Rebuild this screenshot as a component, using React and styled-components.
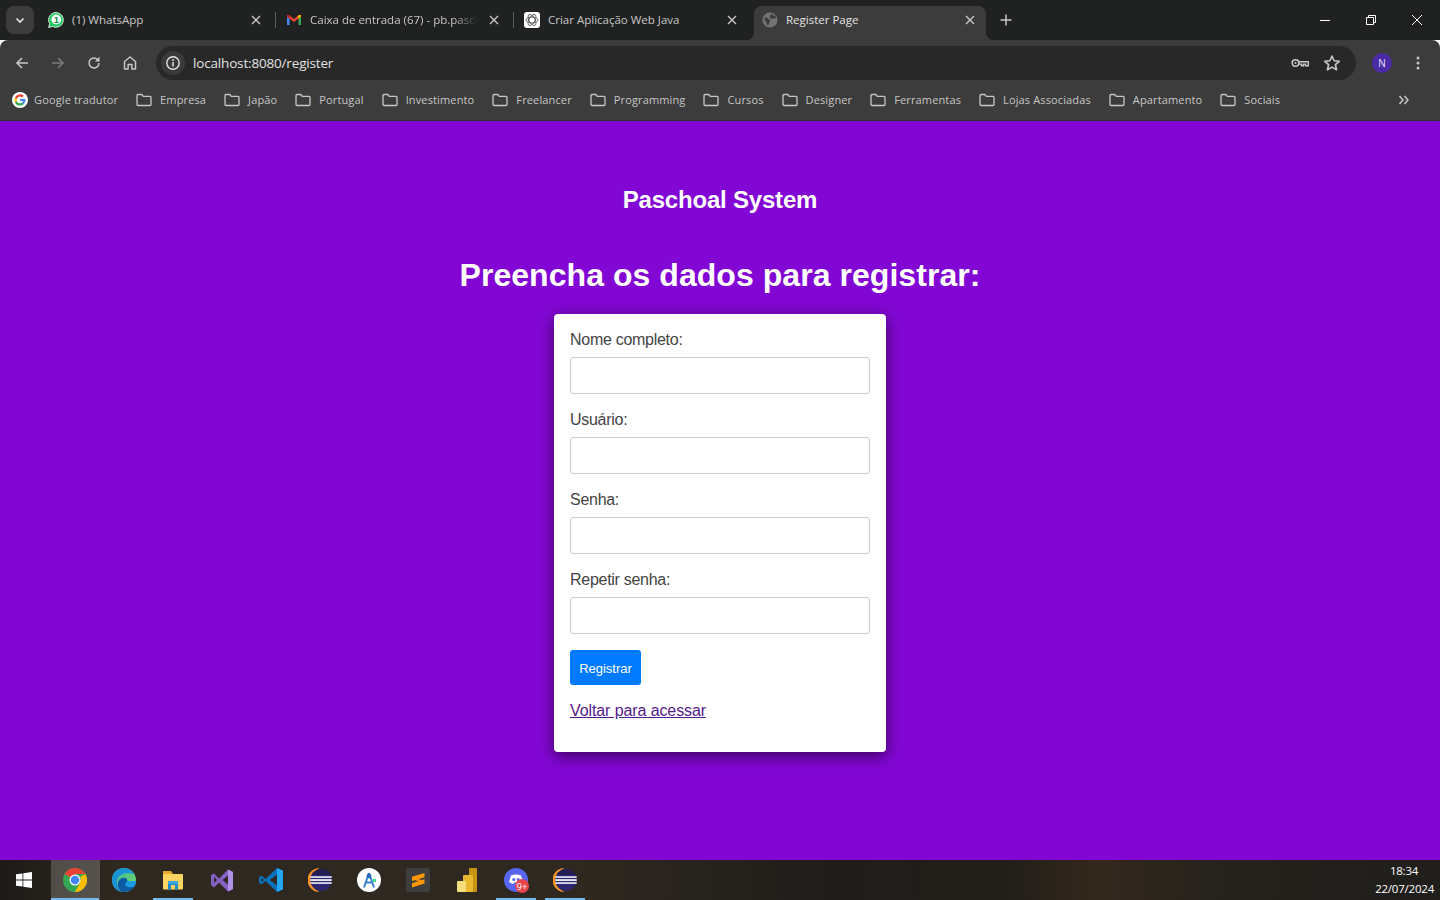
import React from 'react';
import styled, { createGlobalStyle } from 'styled-components';

const Global = createGlobalStyle`
  html, body { margin: 0; padding: 0; height: 100%; overflow: hidden; }
  #root { height: 100%; }
  * { box-sizing: border-box; }
`;

const Screen = styled.div`
  width: 1440px; height: 900px; display: flex; flex-direction: column; overflow: hidden;
  font-family: "Liberation Sans", Arial, sans-serif;
`;
const TabStrip = styled.div`
  height: 40px; background: #202222; display: flex; align-items: flex-end; padding-left: 6px;
  flex: none;
`;
const TabSearch = styled.button`
  width: 28px; height: 28px; margin: 0 6px 6px 0; border: 0; border-radius: 8px; background: #3c3c3c;
  display: flex; align-items: center; justify-content: center; padding: 0; color: #e3e3e3;
`;
const Tab = styled.div`
  position: relative; width: 232px; height: 34px; padding: 0 8px 6px; display: flex; align-items: center; gap: 8px;
  border-radius: 8px 8px 0 0; background: ${p => (p.$active ? '#3c3c3c' : 'transparent')};
  color: ${p => (p.$active ? '#e3e3e3' : '#c7c7c7')};
  ${p => p.$active && `
    &::before, &::after { content: ''; position: absolute; bottom: 0; width: 8px; height: 8px; }
    &::before { left: -8px; background: radial-gradient(circle at 0 0, transparent 8px, #3c3c3c 8.5px); }
    &::after { right: -8px; background: radial-gradient(circle at 100% 0, transparent 8px, #3c3c3c 8.5px); }
  `}
`;
const TabTitle = styled.span`
  flex: 1; min-width: 0; white-space: nowrap; overflow: hidden; font: 11.5px/16px "Open Sans", sans-serif; padding-bottom: 1px;
  ${p => p.$fade && `-webkit-mask-image: linear-gradient(90deg, #000 85%, transparent 100%); mask-image: linear-gradient(90deg, #000 85%, transparent 100%);`}
`;
const TabClose = styled.span`
  width: 16px; height: 16px; display: flex; align-items: center; justify-content: center; flex: none; color: #c7c7c7;
`;
const TabSep = styled.span`
  width: 6px; height: 16px; margin-bottom: 12px; display: flex; justify-content: center; flex: none;
  &::before { content: ''; width: 1px; height: 100%; background: ${p => (p.$blank ? 'transparent' : '#5a5c5c')}; }
`;
const NewTab = styled.span`
  width: 28px; height: 28px; margin: 0 0 6px 6px; display: flex; align-items: center; justify-content: center; color: #c7c7c7;
`;
const WindowControls = styled.div`
  margin-left: auto; align-self: flex-start; display: flex; height: 40px; color: #fff;
`;
const WinBtn = styled.span`
  width: 46px; height: 40px; display: flex; align-items: center; justify-content: center;
`;
const Toolbar = styled.div`
  height: 40px; background: #3c3c3c; flex: none; display: flex; align-items: flex-end; padding: 0 0 0 4px;
  border-radius: 8px 8px 0 0; position: relative;
`;
const NavBtn = styled.span`
  width: 36px; height: 34px; display: flex; align-items: center; justify-content: center; color: ${p => (p.$off ? '#7c7c7c' : '#c7c7c7')};
`;
const Omnibox = styled.div`
  width: 1200px; height: 34px; margin-left: 8px; background: #282828; border-radius: 17px; display: flex; align-items: center; padding: 0 8px 0 5px;
`;
const InfoChip = styled.span`
  width: 24px; height: 24px; border-radius: 50%; background: #3a3a3a; display: flex; align-items: center; justify-content: center; color: #e3e3e3; flex: none;
`;
const Url = styled.span`
  margin-left: 8px; font: 13.5px "Open Sans", sans-serif; color: #e3e3e3; flex: 1; letter-spacing: -.17px;
`;
const OmniIcon = styled.span`
  width: 32px; height: 24px; display: flex; align-items: center; justify-content: center; color: #c7c7c7;
`;
const Avatar = styled.span`
  width: 20px; height: 20px; border-radius: 50%; background: #4b2aa6; color: #e8e4ff; margin-left: 16px; display: flex; align-items: center; justify-content: center;
  font: 10px "Open Sans", sans-serif; margin-bottom: 7px; flex: none;
`;
const Kebab = styled.span`
  margin-left: 16px; margin-bottom: 7px; width: 20px; height: 20px; display: flex; align-items: center; justify-content: center; color: #c7c7c7;
`;
const BookmarkBar = styled.div`
  height: 41px; background: #3c3c3c; border-bottom: 1px solid #2f2f2f; flex: none; display: flex; align-items: center; padding: 0 0 1px 12px; gap: 18px;
`;
const Bookmark = styled.span`
  display: flex; align-items: center; gap: 6px; color: #c7c7c7;
`;
const BookmarkLabel = styled.span`
  font: 11px "Open Sans", sans-serif; white-space: nowrap; margin-left: ${p => p.$inset || 0}px; letter-spacing: .135px;
`;
const More = styled.span`
  margin-left: auto; width: 42px; display: flex; color: #c7c7c7;
`;

const Page = styled.main`
  flex: 1; background: #8307d4; color: #fff; display: flex; flex-direction: column; align-items: center; padding-top: 64px; min-height: 0;
`;
const Brand = styled.h2`
  margin: 0; font-size: 24px; line-height: 29px; font-weight: 700; letter-spacing: -.2px;
`;
const Heading = styled.h1`
  margin: 42px 0 0; font-size: 32px; line-height: 38px; font-weight: 700; letter-spacing: .05px;
`;
const Card = styled.form`
  width: 332px; height: 438px; margin-top: 20px; padding: 16px; background: #fff; border-radius: 4px; box-shadow: 0 4px 16px rgba(0,0,0,.6); color: #333;
  display: flex; flex-direction: column; align-items: flex-start;
`;
const Field = styled.div`
  width: 100%; margin-bottom: 16px; display: flex; flex-direction: column;
`;
const Label = styled.label`
  font-size: 16px; line-height: 19px; margin-bottom: 8px; color: #444; letter-spacing: -.28px;
`;
const Input = styled.input`
  width: 100%; height: 37px; border: 1px solid #ccc; border-radius: 3px; background: #fff; padding: 8px; font: 16px "Liberation Sans", sans-serif; outline: 0;
`;
const Submit = styled.button`
  height: 35px; width: 71px; padding: 1px 0 0; border: 0; border-radius: 3px; background: #007bff; color: #fff; font: 13px "Liberation Sans", sans-serif;
`;
const BackLink = styled.a`
  margin-top: 16px; font-size: 16px; line-height: 19px; color: #551a8b; text-decoration: underline; letter-spacing: -.1px;
`;

const Taskbar = styled.footer`
  height: 40px; flex: none; display: flex; align-items: stretch; color: #fff;
  background: linear-gradient(90deg, #1d1b18 0%, #2f2820 8%, #2f2820 40%, #1f1d1a 58%, #221e19 70%, #33281d 76%, #26221d 85%, #1f1e1b 100%);
`;
const StartBtn = styled.span`
  width: 50.5px; padding-right: 3px; display: flex; align-items: center; justify-content: center; flex: none;
`;
const Pinned = styled.span`
  position: relative; width: 49px; display: flex; align-items: center; justify-content: center; flex: none;
  background: ${p => (p.$active ? 'rgba(255,255,255,.2)' : 'transparent')};
  ${p => p.$open && `
    &::after { content: ''; position: absolute; bottom: 0; height: 2px; left: ${p.$active ? 0 : 4}px; right: ${p.$active ? 1 : 5}px; background: #76b9ed; }
  `}
`;
const Clock = styled.div`
  margin-left: auto; width: 70px; padding: 2px 6px 0 0; text-align: right; font: 11.5px/18px "Open Sans", sans-serif; color: #fff; letter-spacing: -.22px;
`;
const ClockTime = styled.div`
  text-align: center; padding-left: 4px;
`;

const Svg = ({ s = 16, v = 16, children, ...r }) => (
  <svg width={s} height={s} viewBox={`0 0 ${v} ${v}`} fill="none" {...r}>{children}</svg>
);
const X = () => (
  <Svg s={10} v={10}><path d="M1 1l8 8M9 1L1 9" stroke="currentColor" strokeWidth="1.4" /></Svg>
);
const Folder = () => (
  <Svg>
    <path d="M1 3.500c0-.6.4-1 1-1h3.800l1.500 1.800h6.700c.6 0 1 .4 1 1v7.200c0 .6-.4 1-1 1H2c-.6 0-1-.4-1-1z" stroke="currentColor" strokeWidth="1.300" />
  </Svg>
);
const WhatsApp = () => (
  <Svg>
    <path d="M8 .5a7.400 7.400 0 0 0-6.400 11.100L.6 15.500l4-1A7.400 7.400 0 1 0 8 .5z" fill="#1fc95d" stroke="#fff" strokeWidth=".8" />
    <circle cx="8.300" cy="7.500" r="4.900" fill="#fff" />
    <text x="8.300" y="11" textAnchor="middle" fontSize="9.500" fontWeight="700" fontFamily="Liberation Sans" fill="#0a8f45">1</text>
  </Svg>
);
const Gmail = () => (
  <Svg>
    <path d="M1 13V4.300l2.500 1.200V13z" fill="#4285f4" />
    <path d="M15 13V4.300l-2.500 1.200V13z" fill="#34a853" />
    <path d="M1 4.400C1 3 2.400 2.600 3.300 3.300L8 7l4.700-3.700c.9-.7 2.300-.3 2.300 1.100l-2.500 2L8 9.900 3.500 6.400z" fill="#ea4335" />
    <path d="M12.500 6.400 15 4.400C15 3 13.600 2.600 12.700 3.300L11.500 4.200z" fill="#fbbc04" />
    <path d="M1 4.400C1 3 2.400 2.600 3.300 3.300L4.500 4.200 3.500 6.400z" fill="#c5221f" />
  </Svg>
);
const GptIcon = () => (
  <Svg>
    <rect width="16" height="16" rx="3" fill="#fff" />
    <g stroke="#555" strokeWidth=".9" fill="none">
      <ellipse cx="8" cy="8" rx="6" ry="3" />
      <ellipse cx="8" cy="8" rx="6" ry="3" transform="rotate(60 8 8)" />
      <ellipse cx="8" cy="8" rx="6" ry="3" transform="rotate(120 8 8)" />
    </g>
  </Svg>
);
const Globe = () => (
  <Svg>
    <circle cx="8" cy="8" r="7.500" fill="#717374" />
    <path d="M2.500 5.500c2-.5 3 .5 4 1.500s2 1 1.600 2.400-1.400 1-1.400 2.600c0 1-.6 1.500-1.400.7-.8-1-.7-2.500-1.700-3.400-.9-.8-1.600-1.600-.6-3.800zM9 1.500c1.500.3 1 1.800 2 2 1 .2 2-.5 2.500.5l.4 2.500c-1.500-.5-3 0-4 .2-1 .2-2.400-.7-2-2 .3-1.200 1-1.700 1.100-3.200z" fill="#3c3c3c" />
  </Svg>
);
const GoogleG = () => (
  <Svg>
    <circle cx="8" cy="8" r="8" fill="#fff" />
    <path d="M13.400 8.100c0-.4 0-.8-.1-1.100H8v2.100h3a2.600 2.600 0 0 1-1.100 1.700l1.800 1.400c1-1 1.700-2.400 1.700-4.100z" fill="#4285f4" />
    <path d="M8 13.600c1.500 0 2.800-.5 3.700-1.400l-1.800-1.400c-.5.3-1.100.5-1.900.5-1.500 0-2.700-1-3.100-2.300L3 10.400a5.600 5.600 0 0 0 5 3.200z" fill="#34a853" />
    <path d="M4.900 9a3.400 3.400 0 0 1 0-2.100L3 5.500a5.600 5.600 0 0 0 0 5z" fill="#fbbc04" />
    <path d="M8 4.600c.8 0 1.600.3 2.200.8l1.600-1.600A5.600 5.600 0 0 0 3 5.500l1.900 1.400C5.300 5.600 6.500 4.600 8 4.600z" fill="#ea4335" />
  </Svg>
);

const Back = () => <Svg><path d="M14 8H3M8 3 3 8l5 5" stroke="currentColor" strokeWidth="1.600" /></Svg>;
const Forward = () => <Svg><path d="M2 8h11M8 3l5 5-5 5" stroke="currentColor" strokeWidth="1.600" /></Svg>;
const Reload = () => <Svg><path d="M13 8a5 5 0 1 1-1.500-3.600L13 6" stroke="currentColor" strokeWidth="1.500" /><path d="M13.500 1.800v4.700H8.800z" fill="currentColor" /></Svg>;
const Home = () => <Svg><path d="M8 2 2.500 6.500V14h3.600V9.500h3.800V14h3.600V6.500z" stroke="currentColor" strokeWidth="1.500" strokeLinejoin="round" /></Svg>;
const Info = () => <Svg><circle cx="8" cy="8" r="6.200" stroke="currentColor" strokeWidth="1.400" /><path d="M8 7v4.500" stroke="currentColor" strokeWidth="1.500" /><circle cx="8" cy="5" r="1" fill="currentColor" /></Svg>;
const KeyIcon = () => <Svg s={20} v={20}><circle cx="5.500" cy="10" r="3.300" stroke="currentColor" strokeWidth="1.600" /><circle cx="5.500" cy="10" r="1" fill="currentColor" /><path d="M8.800 8.700h9.500v4h-2.800v-1.600h-2v1.600h-2v-1.600H8.800" stroke="currentColor" strokeWidth="1.400" /></Svg>;
const Star = () => <Svg s={18} v={18}><path d="m9 2 2.100 4.800 5.200.5-3.900 3.400 1.200 5.100L9 13.100l-4.600 2.700 1.200-5.100-3.900-3.400 5.200-.5z" stroke="currentColor" strokeWidth="1.600" strokeLinejoin="round" /></Svg>;
const Dots = () => <Svg><circle cx="8" cy="3" r="1.500" fill="currentColor" /><circle cx="8" cy="8" r="1.500" fill="currentColor" /><circle cx="8" cy="13" r="1.500" fill="currentColor" /></Svg>;

const ChromeIcon = () => (
  <Svg s={24} v={24}>
    <circle cx="12" cy="12" r="12" fill="#34a853" />
    <path d="M12 12 1.600 6A12 12 0 0 1 22.400 6H12z" fill="#ea4335" />
    <path d="M12 12h10.400A12 12 0 0 1 12 24l5.200-9z" fill="#fbbc04" />
    <path d="M22.400 6A12 12 0 0 1 12 24l5.200-9a6 6 0 0 0 0-6z" fill="#fbbc04" />
    <circle cx="12" cy="12" r="5.500" fill="#fff" />
    <circle cx="12" cy="12" r="4.300" fill="#4285f4" />
  </Svg>
);
const EdgeIcon = () => (
  <Svg s={24} v={24}>
    <defs>
      <linearGradient id="eg" x1="0" y1="0" x2="1" y2="1"><stop offset="0" stopColor="#2fb6b0" /><stop offset="1" stopColor="#7dd957" /></linearGradient>
    </defs>
    <circle cx="12" cy="12" r="12" fill="url(#eg)" />
    <path d="M0 12C0 5 5 0 12 0c5 0 9 3 10.500 6.500C20 5 12 3.500 7 8.500 3.500 12 4.500 19 9.500 23.700 4 22.500 0 18 0 12z" fill="#1c93d6" />
    <path d="M9.500 23.700C5 20 4.500 13 9 10.500c3-1.700 6.500-.5 6.500 2.500H24c0 6-5 11-12 11-.9 0-1.700-.1-2.500-.3z" fill="#0c59a4" />
    <path d="M15.500 13H24c0 2-.6 3.700-1.500 5.200-3 1.800-7.500 1.500-9-1-.7-1.500.8-2.200 2-4.200z" fill="#1b9de2" />
  </Svg>
);
const ExplorerIcon = () => (
  <Svg s={24} v={24}>
    <path d="M2 3h8l2 3h10v3H2z" fill="#e9a92c" />
    <rect x="2" y="6" width="20" height="15.500" rx="1" fill="#fcd462" />
    <path d="M7 21.500V14h10v7.500h-3V17h-4v4.500z" fill="#1a88c9" />
    <rect x="7" y="13" width="10" height="3" fill="#3aa6e0" />
  </Svg>
);
const VsIcon = () => (
  <Svg s={24} v={24}>
    <path d="M1 7l3-1.500 5 5 9-9 5 2.500v17l-5 2.500-9-9-5 5L1 17z" fill="#8661c5" />
    <path d="M18 1.500l5 2.500v17l-5 2.500z" fill="#b390e8" />
    <path d="M4 9v6l3-3z" fill="#2f2820" />
    <path d="M18 7.500 12.500 12l5.500 4.500z" fill="#2f2820" />
  </Svg>
);
const VscodeIcon = () => (
  <Svg s={26} v={24}>
    <path d="M17.500 1 23 3.500v17L17.500 23 7 13l-3.700 3L1 14.700V9.300L3.300 8 7 11z" fill="#0a74bb" />
    <path d="M17.500 1 23 3.500v17L17.500 23z" fill="#23a9f2" />
    <path d="M17.500 7 11 12l6.500 5z" fill="#2f2820" />
    <path d="M3.300 10v4L5.500 12z" fill="#2f2820" />
  </Svg>
);
const EclipseIcon = () => (
  <Svg s={24} v={24}>
    <path d="M11.500 0A12 12 0 0 0 11.500 24 13.500 13.500 0 0 1 11.500 0z" fill="#f7941e" />
    <circle cx="13" cy="12" r="10.800" fill="#2e2670" />
    <path d="M13 1.200a10.800 10.800 0 0 1 9.500 5.800h-19A10.800 10.800 0 0 1 13 1.200z" fill="#241d52" />
    <rect x="2.300" y="8.200" width="21.400" height="1.700" fill="#e6e6ef" />
    <rect x="2.300" y="11.200" width="21.400" height="1.700" fill="#fff" />
    <rect x="2.300" y="14.200" width="21.400" height="1.700" fill="#e6e6ef" />
  </Svg>
);
const StudioIcon = () => (
  <Svg s={24} v={24}>
    <circle cx="12" cy="12" r="12" fill="#fff" />
    <path d="M12 5 7 19.500M12 5l5 14.500M8 14.500h8" stroke="#3b7fd0" strokeWidth="2" />
    <circle cx="12" cy="8" r="2.400" fill="#2f6cb8" />
    <path d="M15.500 11h3.500v3h-3z" fill="#3ddc84" />
  </Svg>
);
const SublimeIcon = () => (
  <Svg s={24} v={24}>
    <rect width="24" height="24" rx="2" fill="#3e3e3e" />
    <path d="M18.500 5v4.300L6 13V8.700zM18.500 11.200v4.300L6 19.500v-4.300zM6 8.700l12.500 4.300v2.500L6 11z" fill="#ff9800" />
  </Svg>
);
const PowerBi = () => (
  <Svg s={24} v={24}>
    <rect x="14" y="0" width="8" height="24" rx="1" fill="#c99312" />
    <rect x="8" y="7" width="10" height="17" rx="1" fill="#e8b72f" />
    <rect x="2" y="13" width="9" height="11" rx="1" fill="#f6de7d" />
  </Svg>
);
const DiscordIcon = () => (
  <Svg s={24} v={24} overflow="visible">
    <circle cx="12" cy="12" r="12" fill="#5865f2" />
    <path d="M7 7.500c3-1.500 7-1.500 10 0l2 6.500c-1.500 1.200-3 1.800-4 2l-1-1.500h-4l-1 1.500c-1-.2-2.500-.8-4-2z" fill="#fff" />
    <circle cx="9.800" cy="11.500" r="1.500" fill="#5865f2" />
    <circle cx="14.200" cy="11.500" r="1.500" fill="#5865f2" />
    <circle cx="18" cy="18" r="7" fill="#e8434a" />
    <text x="18" y="21.500" textAnchor="middle" fontSize="9.500" fontFamily="Open Sans" fill="#fff">9+</text>
  </Svg>
);
const WindowsLogo = () => (
  <Svg>
    <path d="M0 2.300 6.500 1.400v6.200H0zM7.300 1.300 16 0v7.600H7.300zM0 8.400h6.500v6.200L0 13.700zM7.300 8.400H16V16l-8.700-1.300z" fill="#fff" />
  </Svg>
);

const folders = [
  'Empresa', 'Japão', 'Portugal', 'Investimento', 'Freelancer', 'Programming', 'Cursos',
  'Designer', 'Ferramentas', 'Lojas Associadas', 'Apartamento', 'Sociais',
];

export default function App() {
  return (
    <Screen>
      <Global />
      <TabStrip>
        <TabSearch>
          <Svg s={10} v={10}><path d="M1.500 3.500 5 7l3.500-3.500" stroke="currentColor" strokeWidth="1.600" /></Svg>
        </TabSearch>
        <Tab><WhatsApp /><TabTitle>(1) WhatsApp</TabTitle><TabClose><X /></TabClose></Tab>
        <TabSep />
        <Tab><Gmail /><TabTitle $fade>Caixa de entrada (67) - pb.paschoal</TabTitle><TabClose><X /></TabClose></Tab>
        <TabSep />
        <Tab><GptIcon /><TabTitle>Criar Aplicação Web Java</TabTitle><TabClose><X /></TabClose></Tab>
        <TabSep $blank />
        <Tab $active><Globe /><TabTitle>Register Page</TabTitle><TabClose><X /></TabClose></Tab>
        <NewTab><Svg s={12} v={12}><path d="M6 .5v11M.5 6h11" stroke="currentColor" strokeWidth="1.500" /></Svg></NewTab>
        <WindowControls>
          <WinBtn><Svg s={10} v={10}><path d="M0 5.500h10" stroke="#fff" /></Svg></WinBtn>
          <WinBtn><Svg s={10} v={10}><path d="M.5 2.500h7v7h-7zM2.500 2.500v-2h7v7h-2" stroke="#fff" /></Svg></WinBtn>
          <WinBtn><Svg s={10} v={10}><path d="M0 0l10 10M10 0 0 10" stroke="#fff" /></Svg></WinBtn>
        </WindowControls>
      </TabStrip>
      <Toolbar>
        <NavBtn><Back /></NavBtn>
        <NavBtn $off><Forward /></NavBtn>
        <NavBtn><Reload /></NavBtn>
        <NavBtn><Home /></NavBtn>
        <Omnibox>
          <InfoChip><Info /></InfoChip>
          <Url>localhost:8080/register</Url>
          <OmniIcon><KeyIcon /></OmniIcon>
          <OmniIcon><Star /></OmniIcon>
        </Omnibox>
        <Avatar>N</Avatar>
        <Kebab><Dots /></Kebab>
      </Toolbar>
      <BookmarkBar>
        <Bookmark><GoogleG /><BookmarkLabel>Google tradutor</BookmarkLabel></Bookmark>
        {folders.map(f => (
          <Bookmark key={f}><Folder /><BookmarkLabel $inset={2}>{f}</BookmarkLabel></Bookmark>
        ))}
        <More><Svg s={12} v={12}><path d="M1.500 2 5 6l-3.500 4M6.500 2 10 6l-3.500 4" stroke="currentColor" strokeWidth="1.500" /></Svg></More>
      </BookmarkBar>
      <Page>
        <Brand>Paschoal System</Brand>
        <Heading>Preencha os dados para registrar:</Heading>
        <Card onSubmit={e => e.preventDefault()}>
          <Field><Label>Nome completo:</Label><Input /></Field>
          <Field><Label>Usuário:</Label><Input /></Field>
          <Field><Label>Senha:</Label><Input type="password" /></Field>
          <Field><Label>Repetir senha:</Label><Input type="password" /></Field>
          <Submit>Registrar</Submit>
          <BackLink href="#">Voltar para acessar</BackLink>
        </Card>
      </Page>
      <Taskbar>
        <StartBtn><WindowsLogo /></StartBtn>
        <Pinned $active $open><ChromeIcon /></Pinned>
        <Pinned><EdgeIcon /></Pinned>
        <Pinned $open><ExplorerIcon /></Pinned>
        <Pinned><VsIcon /></Pinned>
        <Pinned><VscodeIcon /></Pinned>
        <Pinned><EclipseIcon /></Pinned>
        <Pinned><StudioIcon /></Pinned>
        <Pinned><SublimeIcon /></Pinned>
        <Pinned><PowerBi /></Pinned>
        <Pinned $open><DiscordIcon /></Pinned>
        <Pinned $open><EclipseIcon /></Pinned>
        <Clock><ClockTime>18:34</ClockTime><div>22/07/2024</div></Clock>
      </Taskbar>
    </Screen>
  );
}
